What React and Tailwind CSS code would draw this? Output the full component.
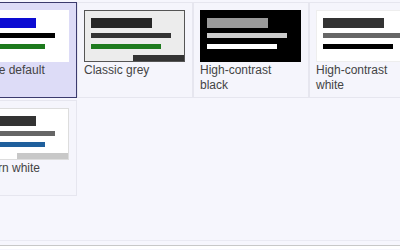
import React from "react";

const THEMES = [
  {
    name: "Theme default",
    selected: true,
    box: "bg-white border-white",
    bars: ["bg-[#0c0cd2]", "bg-black", "bg-[#1d7a1d]"],
    corner: null,
  },
  {
    name: "Classic grey",
    box: "bg-[#ececec] border-[#555555]",
    bars: ["bg-[#262626]", "bg-[#333333]", "bg-[#1d7a1d]"],
    corner: "bg-[#333333]",
  },
  {
    name: "High-contrast black",
    box: "bg-black border-black",
    bars: ["bg-[#9a9a9a]", "bg-[#cccccc]", "bg-white"],
    corner: null,
  },
  {
    name: "High-contrast white",
    box: "bg-white border-[#eeeeee]",
    bars: ["bg-[#333333]", "bg-[#666666]", "bg-black"],
    corner: null,
  },
  {
    name: "Modern white",
    box: "bg-white border-[#dddddd]",
    bars: ["bg-[#333333]", "bg-[#666666]", "bg-[#1f5f9c]"],
    corner: "bg-[#c8c8c8]",
  },
];

function Preview({ theme }) {
  return (
    <div
      className={`flex h-[52px] w-[101px] flex-col border pl-[6px] pt-[7px] ${theme.box}`}
    >
      <div className={`h-[10px] w-[61px] ${theme.bars[0]}`} />
      <div className={`mt-[5px] h-[5px] w-[80px] ${theme.bars[1]}`} />
      <div className={`mt-[6px] h-[5px] w-[70px] ${theme.bars[2]}`} />
      {theme.corner && (
        <div className={`mt-auto h-[6px] w-[51px] self-end ${theme.corner}`} />
      )}
    </div>
  );
}

function Tile({ theme }) {
  return (
    <div
      className={`h-[96px] border px-[6px] pt-[7px] ${
        theme.selected
          ? "border-[#3b3b6e] bg-[#dddcf7]"
          : "border-[#e6e6ef] bg-[#f5f5fc]"
      }`}
    >
      <Preview theme={theme} />
      <div className="mt-[1px] w-[100px] text-[12px] leading-[15px] text-[#444444]">
        {theme.name}
      </div>
    </div>
  );
}

export default function App() {
  return (
    <div
      className="h-[250px] w-[400px] overflow-hidden bg-[#f6f6fd]"
      style={{ fontFamily: '"Liberation Sans", Arial, sans-serif' }}
    >
      <div className="h-[241px] overflow-hidden border-b border-[#eaeaf3] pt-[2px]">
        <div className="ml-[-39px] grid grid-cols-[repeat(4,116px)] gap-y-[2px]">
          {THEMES.map((t) => (
            <Tile key={t.name} theme={t} />
          ))}
        </div>
      </div>
      <div className="h-[4px]" />
      <div className="h-[4px] border-t border-[#c8c8c8] bg-white" />
    </div>
  );
}
